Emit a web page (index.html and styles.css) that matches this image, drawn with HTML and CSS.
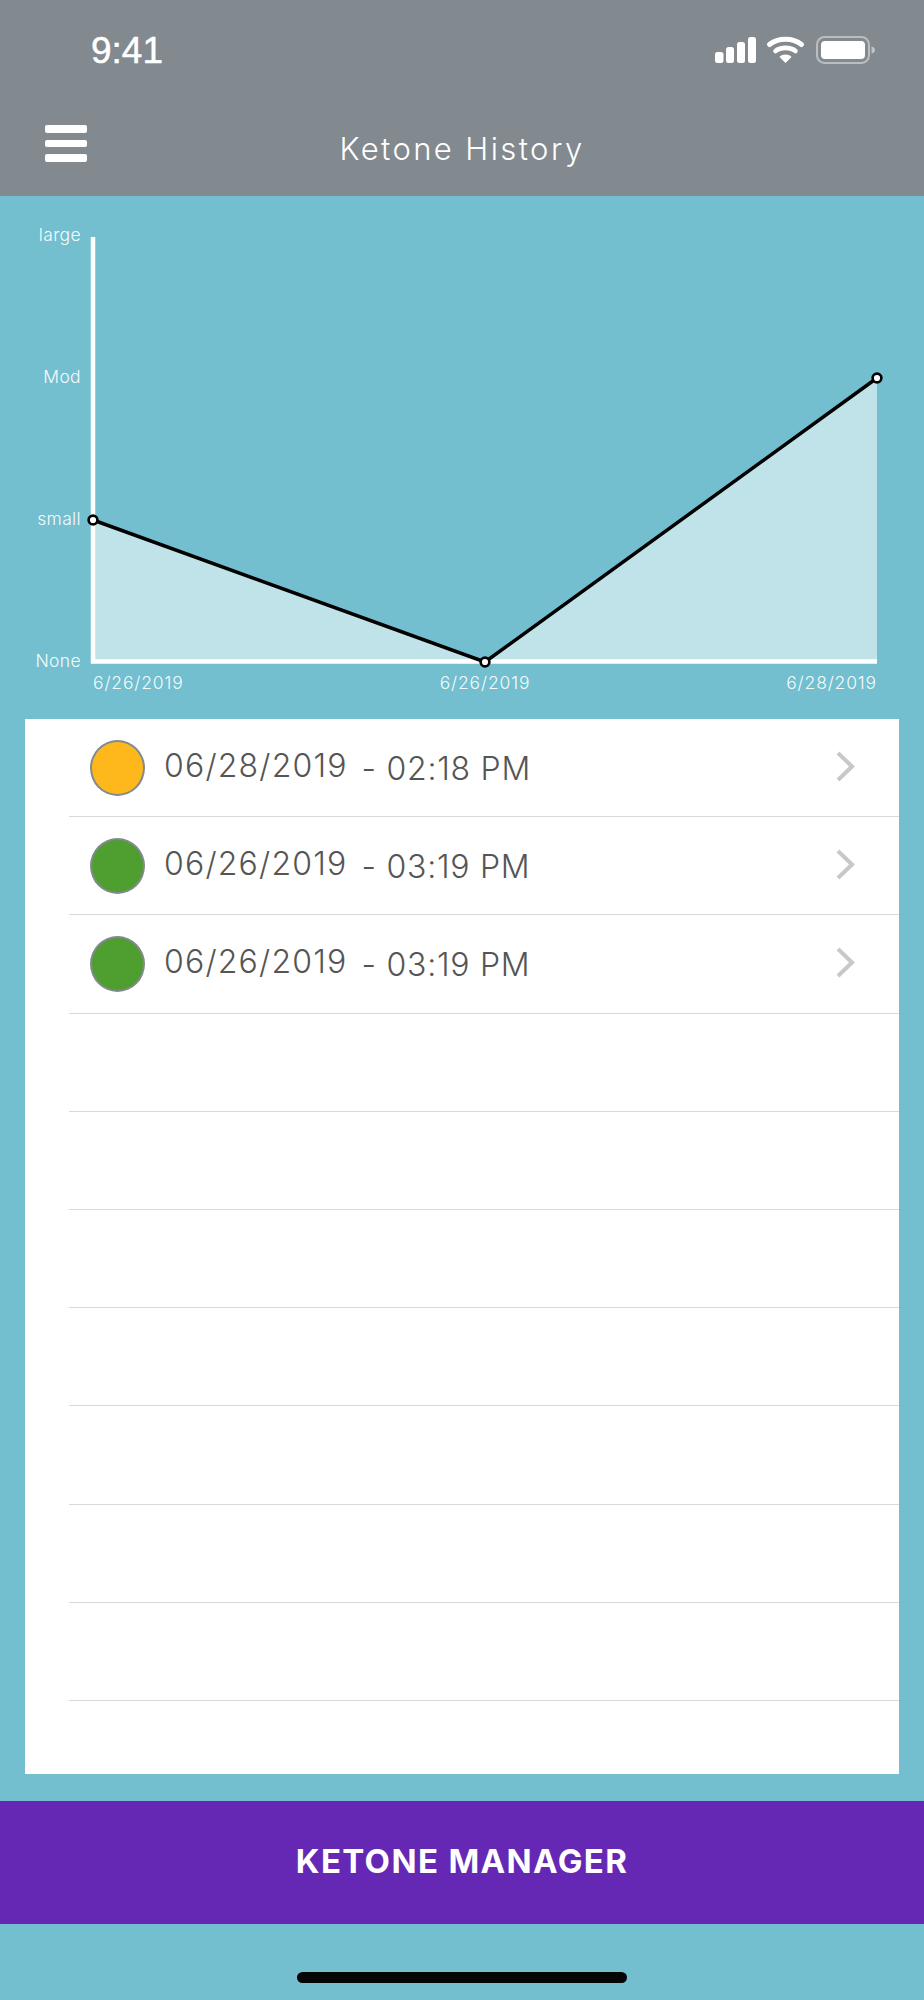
FILE: index.html
```html
<!DOCTYPE html>
<html lang="en">
<head>
<meta charset="utf-8">
<title>Ketone History</title>
<link rel="stylesheet" href="styles.css">
</head>
<body>
<div class="page">
  <header class="header">
    <div class="status">
      <span class="clock">9:41</span>
      <svg class="status-icons" width="164" height="28" viewBox="0 0 164 28">
        <rect x="2" y="16" width="8.5" height="11" rx="2.5" fill="#fff"/>
        <rect x="13" y="11" width="8" height="16" rx="2.5" fill="#fff"/>
        <rect x="24" y="6" width="8" height="21" rx="2.5" fill="#fff"/>
        <rect x="35" y="1" width="8" height="26" rx="2.5" fill="#fff"/>
        <path d="M56.5 8.5 C 65 1.5 80 1.5 88.5 8.5" fill="none" stroke="#fff" stroke-width="5" stroke-linecap="round"/>
        <path d="M62.5 15 C 67.5 10.8 77.5 10.8 82.5 15" fill="none" stroke="#fff" stroke-width="4.6" stroke-linecap="round"/>
        <path d="M66.5 21 C 69.5 17.8 75.5 17.8 78.5 21 L72.5 27 Z" fill="#fff"/>
        <rect x="104" y="1" width="52" height="26" rx="7.5" fill="none" stroke="#fff" stroke-opacity=".45" stroke-width="2"/>
        <rect x="108" y="5" width="44" height="18" rx="4" fill="#fff"/>
        <path d="M158.5 10.5 C 161 11 162 12.5 162 14 C 162 15.5 161 17 158.5 17.5 Z" fill="#fff" fill-opacity=".5"/>
      </svg>
    </div>
    <div class="navbar">
      <div class="burger"><span></span><span></span><span></span></div>
      <h1 class="title">Ketone History</h1>
    </div>
  </header>

  <svg class="chart" width="924" height="523" viewBox="0 196 924 523">
    <polygon class="area" points="93,520 485,662 877,378 877,660 95,660 95,520"/>
    <path class="axis" d="M93 237 V661.5 H877"/>
    <polyline class="line" points="93,520 485,662 877,378"/>
    <circle class="dot" cx="93" cy="520" r="4.4"/>
    <circle class="dot" cx="485" cy="662" r="4.4"/>
    <circle class="dot" cx="877" cy="378" r="4.4"/>
    <text class="lbl tight end" x="81" y="241">large</text>
    <text class="lbl tight end" x="81" y="383">Mod</text>
    <text class="lbl tight end" x="81" y="525">small</text>
    <text class="lbl tight end" x="81" y="667">None</text>
    <text class="lbl" x="93" y="689">6/26/2019</text>
    <text class="lbl mid" x="485" y="689">6/26/2019</text>
    <text class="lbl end" x="877" y="689">6/28/2019</text>
  </svg>

  <section class="card">
    <div class="row">
      <span class="status-dot amber"></span>
      <span class="date">06/28/2019</span><span class="time">- 02:18 PM</span>
      <svg class="chev" width="19" height="31" viewBox="0 0 19 31"><path d="M2 2 L16 15.5 L2 29"/></svg>
    </div>
    <div class="row">
      <span class="status-dot green"></span>
      <span class="date">06/26/2019</span><span class="time">- 03:19 PM</span>
      <svg class="chev" width="19" height="31" viewBox="0 0 19 31"><path d="M2 2 L16 15.5 L2 29"/></svg>
    </div>
    <div class="row">
      <span class="status-dot green"></span>
      <span class="date">06/26/2019</span><span class="time">- 03:19 PM</span>
      <svg class="chev" width="19" height="31" viewBox="0 0 19 31"><path d="M2 2 L16 15.5 L2 29"/></svg>
    </div>
    <div class="row"></div>
    <div class="row"></div>
    <div class="row"></div>
    <div class="row"></div>
    <div class="row"></div>
    <div class="row"></div>
    <div class="row"></div>
  </section>

  <button class="cta">KETONE MANAGER</button>
  <div class="home"><span class="home-bar"></span></div>
</div>
</body>
</html>
```
FILE: styles.css
```css
* { box-sizing: border-box; }
html, body { margin: 0; padding: 0; }
body { background: #73bfd0; font-family: "Inter", "Liberation Sans", sans-serif; }
.page { width: 924px; height: 2000px; display: flex; flex-direction: column; background: #73bfd0; }

.header { height: 196px; background: #82898f; color: #fff; display: flex; flex-direction: column; }
.status { height: 96px; padding: 31px 48px 0 91px; display: flex; justify-content: space-between; align-items: flex-start; }
.clock { font-family: "Liberation Sans", sans-serif; font-size: 37px; line-height: 40px; font-weight: 400; -webkit-text-stroke: .5px #fff; }
.status-icons { margin-top: 5px; margin-right: -1px; }
.navbar { height: 100px; position: relative; display: flex; align-items: flex-start; justify-content: center; }
.burger { position: absolute; left: 45px; top: 29px; width: 42px; display: flex; flex-direction: column; gap: 7px; }
.burger span { height: 7.5px; background: #fff; border-radius: 2px; }
.title { margin: 33px 0 0; font-family: "Inter", sans-serif; font-weight: 300; font-size: 31px; line-height: 40px; letter-spacing: 2.4px; color: #fff; }

.chart { display: block; flex: none; }
.area { fill: #c0e3e9; }
.axis { fill: none; stroke: #fff; stroke-width: 4.5; }
.line { fill: none; stroke: #000; stroke-width: 3.5; }
.dot { fill: #fff; stroke: #000; stroke-width: 2.6; }
.lbl { font-family: "Inter", sans-serif; font-size: 17.5px; fill: #fff; fill-opacity: .95; font-weight: 300; letter-spacing: .85px; }
.tight { letter-spacing: .35px; }
.end { text-anchor: end; }
.mid { text-anchor: middle; }

.card { margin: 0 25px 0 25px; height: 1055px; flex: none; background: #fff; padding-left: 44px; }
.row { height: 98.2px; border-bottom: 1.5px solid #d8d8de; display: flex; align-items: center; padding-left: 21px; position: relative; }
.status-dot { width: 55px; height: 56px; border-radius: 50%; border: 2.5px solid #82898f; margin-right: 19px; flex: none; }
.amber { background: #ffb81c; }
.green { background: #4f9f30; }
.date { font-size: 32px; font-weight: 300; color: #555; line-height: 36px; width: 197.5px; position: relative; top: -1.5px; letter-spacing: 1.2px; }
.time { font-size: 32px; font-weight: 350; color: #555; line-height: 36px; position: relative; top: 1px; letter-spacing: .75px; }
.chev { position: absolute; right: 44px; top: 32px; }
.chev path { fill: none; stroke: #c7c7cc; stroke-width: 4; }

.cta { margin: 27px 0 0; height: 123px; flex: none; border: 0; background: #6528b4; color: #fff; font-family: "Inter", sans-serif; font-weight: 700; font-size: 33px; letter-spacing: 1.35px; padding: 0 0 4px; }
.home { flex: 1; position: relative; display: flex; justify-content: center; align-items: flex-start; padding-top: 48px; }
.home-bar { width: 330px; height: 11px; background: #050505; border-radius: 6px; }
```
